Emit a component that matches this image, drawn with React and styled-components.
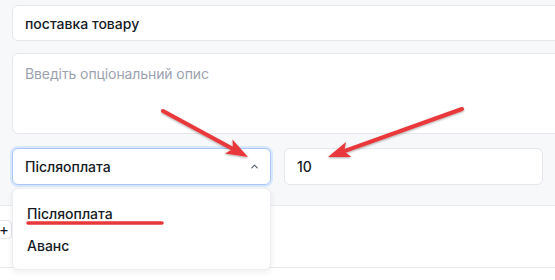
import React from 'react'
import styled, { createGlobalStyle } from 'styled-components'
import { ChevronUp } from 'lucide-react'

const GlobalStyle = createGlobalStyle`
  html, body {
    margin: 0;
    padding: 0;
    background: #fff;
    font-family: Inter, "Noto Sans", sans-serif;
    color: #111827;
  }
  * { box-sizing: border-box; }
`

const Page = styled.div`
  position: relative;
  width: 555px;
  height: 280px;
  overflow: hidden;
  background: #fff;
`

const Panel = styled.div`
  background: #f7f8fa;
  padding: 5px 0 0 12px;
  height: 206px;
  border-bottom: 1px solid #e8eaee;
  display: flex;
  flex-direction: column;
`

const Field = styled.div`
  background: #fff;
  border: 1px solid #e5e7eb;
  border-radius: 6px;
  margin-right: -30px;
  padding: 0 12px;
  font-size: 14px;
  display: flex;
  align-items: ${p => (p.$multi ? 'flex-start' : 'center')};
  height: ${p => p.$h}px;
  padding-top: ${p => (p.$multi ? '11px' : '0')};
  margin-top: ${p => p.$mt || 0}px;
  font-weight: ${p => (p.$placeholder ? 400 : 500)};
  letter-spacing: ${p => (p.$placeholder ? '-0.1px' : '0')};
  color: ${p => (p.$placeholder ? '#9ca3af' : '#161b26')};
`

const Row = styled.div`
  display: grid;
  grid-template-columns: 259px 259px;
  gap: 13px;
  margin-top: 14px;
`

const Select = styled.div`
  height: 37px;
  background: #fff;
  border: 1px solid #a9c9f3;
  box-shadow: 0 0 0 2px #d8e7fc;
  border-radius: 6px;
  padding: 0 10px 0 12px;
  display: flex;
  align-items: center;
  justify-content: space-between;
  font-size: 14px;
  font-weight: 500;
  color: #161b26;
`

const NumberInput = styled.div`
  height: 37px;
  background: #fff;
  border: 1px solid #e5e7eb;
  border-radius: 6px;
  padding: 0 12px;
  display: flex;
  align-items: center;
  font-size: 14px;
  font-weight: 500;
  color: #161b26;
`

const Toolbar = styled.div`
  height: 62px;
  border-bottom: 1px solid #e8eaee;
  padding-top: 14px;
  display: flex;
  align-items: flex-start;
  gap: 3px;
`

const AddButton = styled.div`
  width: 30px;
  height: 19px;
  margin-left: -18px;
  border: 1px solid #e5e7eb;
  border-radius: 4px;
  display: flex;
  align-items: center;
  justify-content: flex-end;
  padding-right: 2px;
  font-size: 15px;
  line-height: 1;
  color: #111827;
`

const Mark = styled.span`
  width: 2px;
  height: 3px;
  margin-top: 10px;
  background: #f5a454;
`

const Menu = styled.div`
  position: absolute;
  left: 12px;
  top: 188px;
  width: 259px;
  padding: 8px 0;
  background: #fff;
  border: 1px solid #eceef1;
  border-radius: 6px;
  box-shadow: 0 2px 6px rgba(17, 24, 39, 0.08);
`

const Item = styled.div`
  height: 32px;
  padding: 0 14px;
  display: flex;
  align-items: center;
  font-size: 14px;
  font-weight: 500;
  color: #161b26;
`

const Overlay = styled.svg`
  position: absolute;
  left: 0;
  top: 0;
  pointer-events: none;
`

const RED = '#e8393a'

const Arrow = ({ x1, y1, x2, y2, head = 22, wide = 8 }) => {
  const dx = x2 - x1
  const dy = y2 - y1
  const len = Math.hypot(dx, dy)
  const ux = dx / len
  const uy = dy / len
  const bx = x2 - ux * head
  const by = y2 - uy * head
  const px = -uy * wide
  const py = ux * wide
  return (
    <g filter="url(#sh)">
      <line x1={x1} y1={y1} x2={bx + ux * 4} y2={by + uy * 4} stroke={RED} strokeWidth="4" strokeLinecap="round" />
      <polygon points={`${x2},${y2} ${bx + px},${by + py} ${bx + ux * 5},${by + uy * 5} ${bx - px},${by - py}`} fill={RED} />
    </g>
  )
}

export default function App() {
  return (
    <Page>
      <GlobalStyle />
      <Panel>
        <Field $h={36}>поставка товару</Field>
        <Field $h={81} $mt={12} $multi $placeholder>Введіть опціональний опис</Field>
        <Row>
          <Select>
            <span>Післяоплата</span>
            <ChevronUp size={11} strokeWidth={2.2} color="#4b5563" />
          </Select>
          <NumberInput>10</NumberInput>
        </Row>
      </Panel>
      <Toolbar>
        <AddButton>+</AddButton>
        <Mark />
      </Toolbar>
      <Menu>
        <Item>Післяоплата</Item>
        <Item>Аванс</Item>
      </Menu>
      <Overlay width="555" height="280">
        <defs>
          <filter id="sh" x="-10%" y="-10%" width="120%" height="130%">
            <feDropShadow dx="0" dy="1" stdDeviation="0.8" floodColor="#000" floodOpacity="0.35" />
          </filter>
        </defs>
        <Arrow x1={163} y1={111} x2={248} y2={157} />
        <Arrow x1={462} y1={109} x2={328} y2={157} />
        <line x1={28} y1={223} x2={162} y2={223} stroke={RED} strokeWidth="3.5" strokeLinecap="round" />
      </Overlay>
    </Page>
  )
}
